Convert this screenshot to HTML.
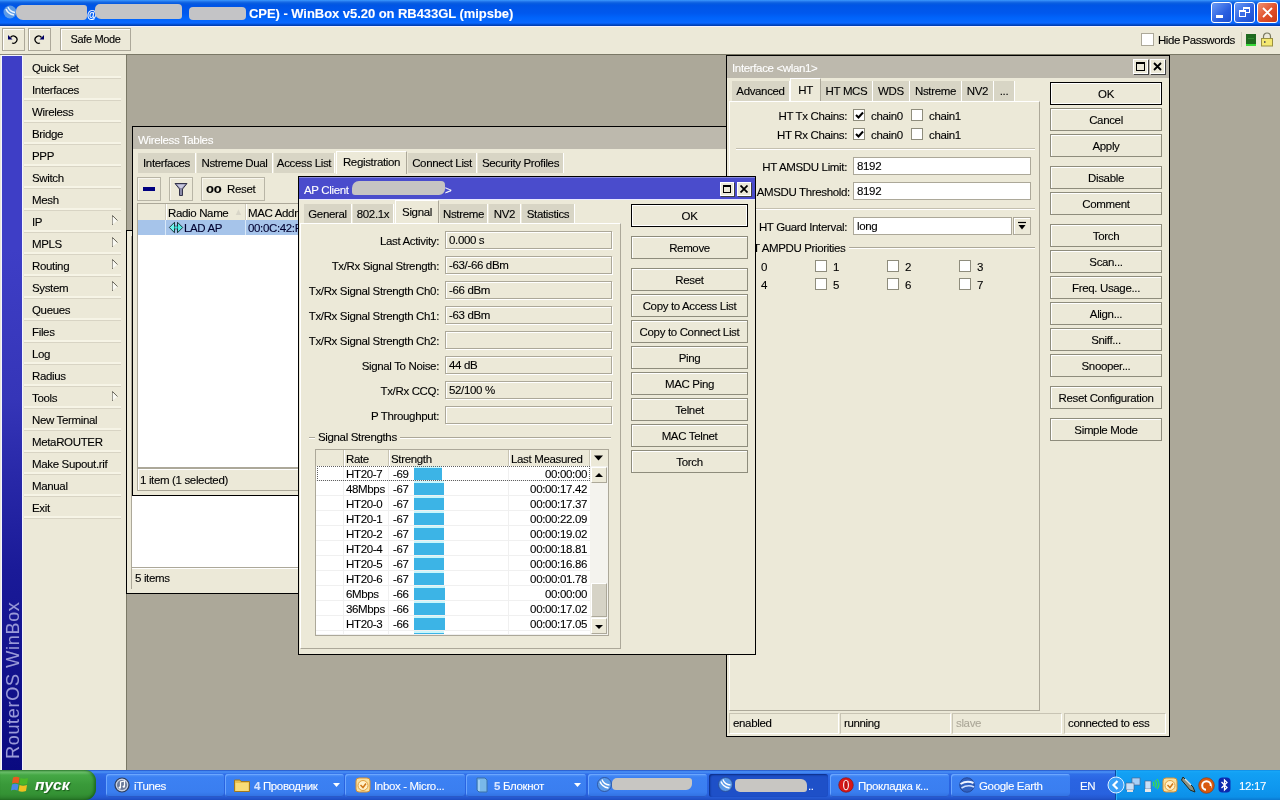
<!DOCTYPE html>
<html><head><meta charset="utf-8">
<style>
*{box-sizing:border-box;margin:0;padding:0}
html,body{width:1280px;height:800px;overflow:hidden;background:#aca899;font-family:"Liberation Sans",sans-serif;font-size:11px;color:#000}
#root{-webkit-text-stroke:0.1px currentColor}
.a{position:absolute}
.t{position:absolute;white-space:nowrap;line-height:14px;font-size:11.5px;letter-spacing:-0.35px}
.r{text-align:right}
.c{text-align:center}
.btn{position:absolute;background:#ece9d8;border:1px solid #8e8c7c;box-shadow:inset 1px 1px 0 #fff;text-align:center;line-height:22px;white-space:nowrap;font-size:11.5px;letter-spacing:-0.35px}
.btn.def{border-color:#000;box-shadow:inset 1px 1px 0 #fff,inset -1px -1px 0 #fff}
.fld{position:absolute;background:#ece9d8;border:1px solid #aca899;box-shadow:inset 1px 1px 0 #fff,1px 1px 0 #fff;line-height:17px;padding-left:3px;white-space:nowrap;font-size:11.5px;letter-spacing:-0.35px}
.wfld{position:absolute;background:#fff;border:1px solid #aca899;line-height:17px;padding-left:3px;white-space:nowrap;font-size:11.5px;letter-spacing:-0.35px}
.tab{position:absolute;background:#d8d5c5;border-right:1px solid #fff;text-align:center;line-height:20px;white-space:nowrap;font-size:11.5px;letter-spacing:-0.35px}
.tab.on{background:#ece9d8;border:1px solid #fff;border-bottom:none;border-right:1px solid #aca899}
.win{position:absolute;background:#ece9d8;border:1px solid #000;box-shadow:inset 1px 1px 0 #ece9d8}
.cb{position:absolute;width:12px;height:12px;background:#fff;border:1px solid #8e8c7c}
.sep{position:absolute;height:2px;border-top:1px solid #c4c0b0;border-bottom:1px solid #fff}
.menu{position:absolute;left:24px;width:97px;height:22px;border-bottom:1px solid #d8d4c4;box-shadow:inset 0 -2px 0 #f6f4e6}
.menu span{position:absolute;left:8px;top:4px;line-height:14px;white-space:nowrap;font-size:11.5px;letter-spacing:-0.35px}
</style></head><body><div id="root" style="position:absolute;left:0;top:0;width:1280px;height:800px;overflow:hidden;will-change:transform">

<!-- TITLE BAR -->
<div class="a" id="title" style="left:0;top:0;width:1280px;height:26px;background:linear-gradient(#3d9dff 0px,#2a7ef0 1px,#0a5ee0 3px,#0055e5 5px,#0058ee 13px,#0064fb 18px,#0a68ff 23px,#0045c0 25px,#003aa8 26px)"></div>
<svg class="a" style="left:3px;top:4px" width="14" height="16" viewBox="0 0 14 16"><circle cx="7" cy="8" r="6.5" fill="#5a9ae8"/><path d="M3 5 Q5 10 11 11" stroke="#e8f4ff" stroke-width="1.6" fill="none"/><path d="M5 3 Q6.5 7.5 12 8.5" stroke="#e8f4ff" stroke-width="1.4" fill="none"/></svg>
<div class="a" style="left:16px;top:5px;width:71px;height:15px;background:#c4c4c6;border-radius:6px 3px 4px 7px"></div>
<div class="t" style="left:87px;top:8px;color:#fff;font-size:10px;font-weight:bold">@</div>
<div class="a" style="left:95px;top:4px;width:87px;height:15px;background:#c4c4c6;border-radius:5px 4px 3px 6px"></div>
<div class="a" style="left:189px;top:7px;width:57px;height:13px;background:#c4c4c6;border-radius:4px"></div>
<div class="t" style="left:249px;top:6px;color:#fff;font-weight:bold;font-size:13px;line-height:15px;letter-spacing:-0.05px">CPE) - WinBox v5.20 on RB433GL (mipsbe)</div>
<div class="a" style="left:1211px;top:2px;width:21px;height:21px;border:1px solid #fff;border-radius:3px;background:linear-gradient(135deg,#6b9bf5,#2a5fe0 60%,#1b4fd0)"></div>
<div class="a" style="left:1216px;top:15px;width:7px;height:3px;background:#fff"></div>
<div class="a" style="left:1234px;top:2px;width:21px;height:21px;border:1px solid #fff;border-radius:3px;background:linear-gradient(135deg,#6b9bf5,#2a5fe0 60%,#1b4fd0)"></div>
<div class="a" style="left:1243px;top:7px;width:7px;height:6px;border:1px solid #fff;border-top-width:2px"></div>
<div class="a" style="left:1239px;top:10px;width:7px;height:7px;border:1px solid #fff;border-top-width:2px;background:#3a6de6"></div>
<div class="a" style="left:1257px;top:2px;width:21px;height:21px;border:1px solid #fff;border-radius:3px;background:linear-gradient(135deg,#f09070,#e0502a 55%,#c83c18)"></div>
<svg class="a" style="left:1261px;top:6px" width="13" height="13" viewBox="0 0 13 13"><path d="M2 2 L11 11 M11 2 L2 11" stroke="#fff" stroke-width="1.8"/></svg>
<!-- TOOLBAR -->
<div class="a" style="left:0;top:26px;width:1280px;height:28px;background:#ece9d8;border-top:1px solid #f4f2ff"></div>
<div class="btn" style="left:2px;top:28px;width:23px;height:23px;border-color:#aca899"></div>
<svg class="a" style="left:7px;top:33px" width="12" height="12" viewBox="0 0 12 12"><path d="M3.5 4.5 A3.6 3.6 0 1 1 5 10" stroke="#000" stroke-width="1.3" fill="none"/><path d="M1 2 L1 6.5 L5.5 6.5 Z" fill="#000066"/></svg>
<div class="btn" style="left:28px;top:28px;width:23px;height:23px;border-color:#aca899"></div>
<svg class="a" style="left:33px;top:33px" width="12" height="12" viewBox="0 0 12 12"><path d="M8.5 4.5 A3.6 3.6 0 1 0 7 10" stroke="#000" stroke-width="1.3" fill="none"/><path d="M11 2 L11 6.5 L6.5 6.5 Z" fill="#000066"/></svg>
<div class="btn" style="left:60px;top:28px;width:71px;height:23px;border-color:#aca899;line-height:21px;font-size:11px">Safe Mode</div>
<div class="a" style="left:1141px;top:33px;width:13px;height:13px;background:#fff;border:1px solid #aca899"></div>
<div class="t" style="left:1158px;top:33px;font-size:11.5px;letter-spacing:-0.45px">Hide Passwords</div>
<div class="a" style="left:1241px;top:32px;width:1px;height:15px;background:#d0ccbc"></div>
<div class="a" style="left:1246px;top:34px;width:10px;height:12px;background:#1f6a1f;border-bottom:2px solid #38d838"></div>
<div class="a" style="left:1248px;top:38px;width:6px;height:1px;background:#2f8a2f"></div>
<svg class="a" style="left:1260px;top:32px" width="14" height="15" viewBox="0 0 14 15"><path d="M3.5 7 V4.5 A3.5 3.5 0 0 1 10.5 4.5 V7" stroke="#7a7a60" stroke-width="1.2" fill="none"/><rect x="1.5" y="6.5" width="11" height="7.5" fill="#f4e870" stroke="#9a9040"/><rect x="4" y="9" width="1.5" height="2" fill="#665"/></svg>
<!-- SIDEBAR -->
<div class="a" style="left:0;top:54px;width:126px;height:716px;background:#ece9d8;border-top:1px solid #8c8a7c"></div>
<div class="a" style="left:1px;top:55px;width:22px;height:715px;background:#f4f4ff"></div>
<div class="a" style="left:2px;top:56px;width:20px;height:714px;background:linear-gradient(#3e3ec6 0%,#3e3ec6 27%,#3535b8 48%,#2828a8 59%,#1a1a98 72%,#0a0a80 100%)"></div>

<div class="menu" style="top:57px"><span>Quick Set</span></div>
<div class="menu" style="top:79px"><span>Interfaces</span></div>
<div class="menu" style="top:101px"><span>Wireless</span></div>
<div class="menu" style="top:123px"><span>Bridge</span></div>
<div class="menu" style="top:145px"><span>PPP</span></div>
<div class="menu" style="top:167px"><span>Switch</span></div>
<div class="menu" style="top:189px"><span>Mesh</span></div>
<div class="menu" style="top:211px"><span>IP</span></div>
<svg class="a" style="left:111px;top:215px" width="8" height="11" viewBox="0 0 8 11"><path d="M1.5 0.5 L1.5 10 M1.5 0.5 L6.5 5.5" stroke="#6a685e" stroke-width="1" fill="none"/><path d="M1.5 1.5 L1.5 9.5 L6 6 Z" fill="#fff" opacity="0.7"/></svg>
<div class="menu" style="top:233px"><span>MPLS</span></div>
<svg class="a" style="left:111px;top:237px" width="8" height="11" viewBox="0 0 8 11"><path d="M1.5 0.5 L1.5 10 M1.5 0.5 L6.5 5.5" stroke="#6a685e" stroke-width="1" fill="none"/><path d="M1.5 1.5 L1.5 9.5 L6 6 Z" fill="#fff" opacity="0.7"/></svg>
<div class="menu" style="top:255px"><span>Routing</span></div>
<svg class="a" style="left:111px;top:259px" width="8" height="11" viewBox="0 0 8 11"><path d="M1.5 0.5 L1.5 10 M1.5 0.5 L6.5 5.5" stroke="#6a685e" stroke-width="1" fill="none"/><path d="M1.5 1.5 L1.5 9.5 L6 6 Z" fill="#fff" opacity="0.7"/></svg>
<div class="menu" style="top:277px"><span>System</span></div>
<svg class="a" style="left:111px;top:281px" width="8" height="11" viewBox="0 0 8 11"><path d="M1.5 0.5 L1.5 10 M1.5 0.5 L6.5 5.5" stroke="#6a685e" stroke-width="1" fill="none"/><path d="M1.5 1.5 L1.5 9.5 L6 6 Z" fill="#fff" opacity="0.7"/></svg>
<div class="menu" style="top:299px"><span>Queues</span></div>
<div class="menu" style="top:321px"><span>Files</span></div>
<div class="menu" style="top:343px"><span>Log</span></div>
<div class="menu" style="top:365px"><span>Radius</span></div>
<div class="menu" style="top:387px"><span>Tools</span></div>
<svg class="a" style="left:111px;top:391px" width="8" height="11" viewBox="0 0 8 11"><path d="M1.5 0.5 L1.5 10 M1.5 0.5 L6.5 5.5" stroke="#6a685e" stroke-width="1" fill="none"/><path d="M1.5 1.5 L1.5 9.5 L6 6 Z" fill="#fff" opacity="0.7"/></svg>
<div class="menu" style="top:409px"><span>New Terminal</span></div>
<div class="menu" style="top:431px"><span>MetaROUTER</span></div>
<div class="menu" style="top:453px"><span>Make Supout.rif</span></div>
<div class="menu" style="top:475px"><span>Manual</span></div>
<div class="menu" style="top:497px"><span>Exit</span></div>
<div class="a" style="left:-76px;top:661px;width:178px;height:18px;transform:rotate(-90deg);color:#9a9ad8;font-size:18px;line-height:18px;letter-spacing:0.7px;white-space:nowrap;text-align:left">RouterOS WinBox</div>

<!-- DESKTOP -->
<div class="a" style="left:126px;top:54px;width:1154px;height:716px;background:#aca899;border-top:1px solid #7a7866;border-left:1px solid #7a7866"></div>


<!-- BACK WINDOW -->
<div class="win" style="left:126px;top:230px;width:200px;height:364px;"></div>
<div class="a" style="left:131px;top:236px;width:180px;height:332px;background:#fff;border-left:1px solid #aca899"></div>
<div class="a" style="left:131px;top:567px;width:180px;height:22px;background:#ece9d8;border-top:1px solid #aca899;border-left:1px solid #aca899;box-shadow:inset 0 1px 0 #fff"></div>
<div class="t" style="left:135px;top:571px">5 items</div>

<!-- WIRELESS TABLES -->
<div class="win" style="left:132px;top:126px;width:595px;height:370px;"></div>
<div class="a" style="left:133px;top:127px;width:593px;height:22px;background:#bdb9ad"></div>
<div class="t" style="left:138px;top:133px;color:#fff">Wireless Tables</div>
<div class="tab" style="left:138px;top:153px;width:58px;height:20px">Interfaces</div>
<div class="tab" style="left:197px;top:153px;width:76px;height:20px">Nstreme Dual</div>
<div class="tab" style="left:274px;top:153px;width:61px;height:20px">Access List</div>
<div class="tab on" style="left:336px;top:151px;width:71px;height:23px;line-height:20px">Registration</div>
<div class="tab" style="left:408px;top:153px;width:69px;height:20px">Connect List</div>
<div class="tab" style="left:478px;top:153px;width:86px;height:20px">Security Profiles</div>
<div class="btn" style="left:137px;top:177px;width:24px;height:24px;border-color:#b8b5a6;box-shadow:inset 1px 1px 0 #f8f6ee"></div>
<div class="a" style="left:143px;top:187px;width:12px;height:4px;background:#000080"></div>
<div class="btn" style="left:169px;top:177px;width:24px;height:24px;border-color:#b8b5a6;box-shadow:inset 1px 1px 0 #f8f6ee"></div>
<svg class="a" style="left:174px;top:182px" width="14" height="15" viewBox="0 0 14 15"><path d="M1 1.5 H13 L8.5 7 V13.5 H5.5 V7 Z" fill="#8a8aa8" stroke="#33334a" stroke-width="1"/><path d="M3 2.5 H11 L8 6 H6 Z" fill="#c8c8e0"/></svg>
<div class="btn" style="left:201px;top:177px;width:64px;height:24px;border-color:#b8b5a6;box-shadow:inset 1px 1px 0 #f8f6ee;line-height:22px;text-align:left"><span style="position:absolute;left:4px;top:4px;font-weight:bold;font-size:13px;line-height:14px;letter-spacing:-0.3px">oo</span><span style="position:absolute;left:25px;top:0">Reset</span></div>
<!-- table -->
<div class="a" style="left:137px;top:203px;width:585px;height:265px;background:#fff;border:1px solid #aca899"></div>
<div class="a" style="left:138px;top:204px;width:583px;height:16px;background:#ece9d8"></div>
<div class="a" style="left:165px;top:204px;width:1px;height:16px;background:#d0ccbc"></div>
<div class="a" style="left:166px;top:204px;width:1px;height:16px;background:#fff"></div>
<div class="a" style="left:245px;top:204px;width:1px;height:16px;background:#d0ccbc"></div>
<div class="a" style="left:246px;top:204px;width:1px;height:16px;background:#fff"></div>
<div class="t" style="left:168px;top:206px">Radio Name</div>
<div class="t" style="left:234px;top:205px;color:#d8d5c8;font-size:9px">&#9650;</div>
<div class="t" style="left:248px;top:206px">MAC Address</div>
<div class="a" style="left:138px;top:220px;width:583px;height:15px;background:#a6c4ea"></div>
<div class="a" style="left:165px;top:220px;width:1px;height:15px;background:#d8e8f8"></div>
<div class="a" style="left:245px;top:220px;width:1px;height:15px;background:#d8e8f8"></div>
<svg class="a" style="left:168px;top:221px" width="16" height="13" viewBox="0 0 16 13"><path d="M1.3 6.5 L6.5 1.3 V11.7 Z" fill="#70f4ec" stroke="#0a1a20" stroke-width="0.85" stroke-linejoin="miter"/><path d="M14.7 6.5 L9.5 1.3 V11.7 Z" fill="#50ece4" stroke="#0a1a20" stroke-width="0.85"/><rect x="6.5" y="5.2" width="3" height="2.6" fill="#40e8e0"/><path d="M6.5 5 H9.5 M6.5 8 H9.5" stroke="#0a1a20" stroke-width="0.9" stroke-dasharray="1 1"/></svg>
<div class="t" style="left:184px;top:221px;color:#000030">LAD AP</div>
<div class="t" style="left:248px;top:221px;color:#000030">00:0C:42:F</div>
<div class="a" style="left:137px;top:468px;width:585px;height:23px;background:#ece9d8;border:1px solid #aca899;border-top:1px solid #aca899;box-shadow:inset 1px 1px 0 #fff"></div>
<div class="t" style="left:140px;top:473px">1 item (1 selected)</div>



<!-- INTERFACE WINDOW -->
<div class="win" style="left:726px;top:55px;width:444px;height:682px;"></div>
<div class="a" style="left:727px;top:56px;width:442px;height:22px;background:#bdb9ad"></div>
<div class="t" style="left:732px;top:61px;color:#fff">Interface &lt;wlan1&gt;</div>
<div class="a" style="left:1133px;top:59px;width:15px;height:15px;background:#ece9d8;border:1px solid #fff;box-shadow:1px 1px 0 #404040"></div>
<div class="a" style="left:1136px;top:62px;width:9px;height:9px;border:1px solid #000;border-top-width:2px"></div>
<div class="a" style="left:1150px;top:59px;width:15px;height:15px;background:#ece9d8;border:1px solid #fff;box-shadow:1px 1px 0 #404040"></div>
<svg class="a" style="left:1153px;top:62px" width="9" height="9" viewBox="0 0 9 9"><path d="M1 1 L8 8 M8 1 L1 8" stroke="#000" stroke-width="1.8"/></svg>
<div class="tab" style="left:732px;top:81px;width:58px;height:20px">Advanced</div>
<div class="tab on" style="left:790px;top:78px;width:31px;height:24px;line-height:22px">HT</div>
<div class="tab" style="left:821px;top:81px;width:52px;height:20px">HT MCS</div>
<div class="tab" style="left:873px;top:81px;width:37px;height:20px">WDS</div>
<div class="tab" style="left:910px;top:81px;width:52px;height:20px">Nstreme</div>
<div class="tab" style="left:962px;top:81px;width:32px;height:20px">NV2</div>
<div class="tab" style="left:994px;top:81px;width:21px;height:20px">...</div>
<div class="a" style="left:729px;top:101px;width:311px;height:610px;border-left:1px solid #fff;border-top:1px solid #fff;border-right:1px solid #aca899;border-bottom:1px solid #aca899"></div>
<div class="t r" style="left:740px;width:107px;top:109px">HT Tx Chains:</div>
<div class="t r" style="left:740px;width:107px;top:128px">HT Rx Chains:</div>

<div class="cb" style="left:853px;top:109px"></div><svg class="a" style="left:855px;top:111px" width="9" height="9" viewBox="0 0 9 9"><path d="M1 4 L3.5 6.5 L8 1.5" stroke="#000" stroke-width="2" fill="none"/></svg>
<div class="t" style="left:871px;top:109px">chain0</div>
<div class="cb" style="left:911px;top:109px"></div>
<div class="t" style="left:929px;top:109px">chain1</div>
<div class="cb" style="left:853px;top:128px"></div><svg class="a" style="left:855px;top:130px" width="9" height="9" viewBox="0 0 9 9"><path d="M1 4 L3.5 6.5 L8 1.5" stroke="#000" stroke-width="2" fill="none"/></svg>
<div class="t" style="left:871px;top:128px">chain0</div>
<div class="cb" style="left:911px;top:128px"></div>
<div class="t" style="left:929px;top:128px">chain1</div>
<div class="sep" style="left:736px;top:148px;width:299px"></div>
<div class="t r" style="left:740px;width:107px;top:160px">HT AMSDU Limit:</div>
<div class="wfld" style="left:853px;top:157px;width:178px;height:18px">8192</div>
<div class="t r" style="left:740px;width:107px;top:185px">HT AMSDU Threshold:</div>
<div class="wfld" style="left:853px;top:182px;width:178px;height:18px">8192</div>
<div class="sep" style="left:736px;top:208px;width:299px"></div>
<div class="t r" style="left:740px;width:107px;top:220px">HT Guard Interval:</div>
<div class="wfld" style="left:853px;top:217px;width:159px;height:18px">long</div>
<div class="btn" style="left:1013px;top:217px;width:18px;height:18px;border-color:#aca899"></div>
<svg class="a" style="left:1017px;top:221px" width="10" height="10" viewBox="0 0 10 10"><path d="M1 1.5 H9" stroke="#000" stroke-width="1.2"/><path d="M1.5 4 H8.5 L5 8.5 Z" fill="#000"/></svg>
<div class="a" style="left:736px;top:247px;width:299px;height:2px;border-top:1px solid #aca899;border-bottom:1px solid #fff"></div>
<div class="t" style="left:745px;top:241px;background:#ece9d8;padding:0 3px 0 0">HT AMPDU Priorities</div>
<div class="cb" style="left:743px;top:260px"></div>
<div class="t" style="left:761px;top:260px">0</div>
<div class="cb" style="left:815px;top:260px"></div>
<div class="t" style="left:833px;top:260px">1</div>
<div class="cb" style="left:887px;top:260px"></div>
<div class="t" style="left:905px;top:260px">2</div>
<div class="cb" style="left:959px;top:260px"></div>
<div class="t" style="left:977px;top:260px">3</div>
<div class="cb" style="left:743px;top:278px"></div>
<div class="t" style="left:761px;top:278px">4</div>
<div class="cb" style="left:815px;top:278px"></div>
<div class="t" style="left:833px;top:278px">5</div>
<div class="cb" style="left:887px;top:278px"></div>
<div class="t" style="left:905px;top:278px">6</div>
<div class="cb" style="left:959px;top:278px"></div>
<div class="t" style="left:977px;top:278px">7</div>
<div class="btn def" style="left:1050px;top:82px;width:112px;height:23px">OK</div>
<div class="btn" style="left:1050px;top:108px;width:112px;height:23px">Cancel</div>
<div class="btn" style="left:1050px;top:134px;width:112px;height:23px">Apply</div>
<div class="btn" style="left:1050px;top:166px;width:112px;height:23px">Disable</div>
<div class="btn" style="left:1050px;top:192px;width:112px;height:23px">Comment</div>
<div class="btn" style="left:1050px;top:224px;width:112px;height:23px">Torch</div>
<div class="btn" style="left:1050px;top:250px;width:112px;height:23px">Scan...</div>
<div class="btn" style="left:1050px;top:276px;width:112px;height:23px">Freq. Usage...</div>
<div class="btn" style="left:1050px;top:302px;width:112px;height:23px">Align...</div>
<div class="btn" style="left:1050px;top:328px;width:112px;height:23px">Sniff...</div>
<div class="btn" style="left:1050px;top:354px;width:112px;height:23px">Snooper...</div>
<div class="btn" style="left:1050px;top:386px;width:112px;height:23px">Reset Configuration</div>
<div class="btn" style="left:1050px;top:418px;width:112px;height:23px">Simple Mode</div>
<div class="a" style="left:729px;top:713px;width:110px;height:21px;border:1px solid #c8c4b4;border-right-color:#fff;border-bottom-color:#fff"></div><div class="t" style="left:733px;top:716px;color:#000">enabled</div>
<div class="a" style="left:840px;top:713px;width:111px;height:21px;border:1px solid #c8c4b4;border-right-color:#fff;border-bottom-color:#fff"></div><div class="t" style="left:844px;top:716px;color:#000">running</div>
<div class="a" style="left:952px;top:713px;width:110px;height:21px;border:1px solid #c8c4b4;border-right-color:#fff;border-bottom-color:#fff"></div><div class="t" style="left:956px;top:716px;color:#aca899">slave</div>
<div class="a" style="left:1064px;top:713px;width:102px;height:21px;border:1px solid #c8c4b4;border-right-color:#fff;border-bottom-color:#fff"></div><div class="t" style="left:1068px;top:716px;color:#000">connected to ess</div>
<!-- AP CLIENT -->
<div class="win" style="left:298px;top:176px;width:458px;height:479px;"></div>
<div class="a" style="left:299px;top:177px;width:456px;height:23px;background:#4a4ccc;border-top:1px solid #8888dd;border-bottom:1px solid #e8e8ff"></div>
<div class="t" style="left:304px;top:183px;color:#fff">AP Client &lt;</div>
<div class="a" style="left:352px;top:181px;width:93px;height:14px;background:#c6c4c2;border-radius:7px 4px 6px 3px"></div>
<div class="t" style="left:445px;top:183px;color:#fff">&gt;</div>
<div class="a" style="left:720px;top:182px;width:14px;height:14px;background:#ece9d8;border:1px solid #fff;box-shadow:1px 1px 0 #404040"></div>
<div class="a" style="left:723px;top:185px;width:8px;height:8px;border:1px solid #000;border-top-width:2px"></div>
<div class="a" style="left:737px;top:182px;width:14px;height:14px;background:#ece9d8;border:1px solid #fff;box-shadow:1px 1px 0 #404040"></div>
<svg class="a" style="left:740px;top:185px" width="8" height="8" viewBox="0 0 8 8"><path d="M0.5 0.5 L7.5 7.5 M7.5 0.5 L0.5 7.5" stroke="#000" stroke-width="1.8"/></svg>
<div class="tab" style="left:304px;top:204px;width:48px;height:19px">General</div>
<div class="tab" style="left:353px;top:204px;width:41px;height:19px">802.1x</div>
<div class="tab on" style="left:395px;top:200px;width:44px;height:24px;line-height:22px">Signal</div>
<div class="tab" style="left:440px;top:204px;width:48px;height:19px">Nstreme</div>
<div class="tab" style="left:489px;top:204px;width:32px;height:19px">NV2</div>
<div class="tab" style="left:522px;top:204px;width:53px;height:19px">Statistics</div>
<div class="a" style="left:300px;top:223px;width:321px;height:426px;border-left:1px solid #fff;border-top:1px solid #fff;border-right:1px solid #aca899;border-bottom:1px solid #aca899"></div>

<div class="t r" style="left:300px;width:139px;top:234px">Last Activity:</div>
<div class="fld" style="left:445px;top:231px;width:167px;height:18px">0.000 s</div>
<div class="t r" style="left:300px;width:139px;top:259px">Tx/Rx Signal Strength:</div>
<div class="fld" style="left:445px;top:256px;width:167px;height:18px">-63/-66 dBm</div>
<div class="t r" style="left:300px;width:139px;top:284px">Tx/Rx Signal Strength Ch0:</div>
<div class="fld" style="left:445px;top:281px;width:167px;height:18px">-66 dBm</div>
<div class="t r" style="left:300px;width:139px;top:309px">Tx/Rx Signal Strength Ch1:</div>
<div class="fld" style="left:445px;top:306px;width:167px;height:18px">-63 dBm</div>
<div class="t r" style="left:300px;width:139px;top:334px">Tx/Rx Signal Strength Ch2:</div>
<div class="fld" style="left:445px;top:331px;width:167px;height:18px"></div>
<div class="t r" style="left:300px;width:139px;top:359px">Signal To Noise:</div>
<div class="fld" style="left:445px;top:356px;width:167px;height:18px">44 dB</div>
<div class="t r" style="left:300px;width:139px;top:384px">Tx/Rx CCQ:</div>
<div class="fld" style="left:445px;top:381px;width:167px;height:18px">52/100 %</div>
<div class="t r" style="left:300px;width:139px;top:409px">P Throughput:</div>
<div class="fld" style="left:445px;top:406px;width:167px;height:18px"></div>
<div class="a" style="left:309px;top:437px;width:302px;height:2px;border-top:1px solid #aca899;border-bottom:1px solid #fff"></div>
<div class="t" style="left:315px;top:430px;background:#ece9d8;padding:0 3px">Signal Strengths</div>
<div class="a" style="left:315px;top:449px;width:294px;height:187px;background:#fff;border:1px solid #aca899;overflow:hidden"></div>
<div class="a" style="left:316px;top:450px;width:292px;height:16px;background:#ece9d8"></div>

<div class="a" style="left:343px;top:450px;width:1px;height:16px;background:#c8c4b4"></div><div class="a" style="left:344px;top:450px;width:1px;height:16px;background:#fff"></div>
<div class="a" style="left:388px;top:450px;width:1px;height:16px;background:#c8c4b4"></div><div class="a" style="left:389px;top:450px;width:1px;height:16px;background:#fff"></div>
<div class="a" style="left:508px;top:450px;width:1px;height:16px;background:#c8c4b4"></div><div class="a" style="left:509px;top:450px;width:1px;height:16px;background:#fff"></div>
<div class="a" style="left:589px;top:450px;width:1px;height:16px;background:#c8c4b4"></div><div class="a" style="left:590px;top:450px;width:1px;height:16px;background:#fff"></div>
<div class="t" style="left:346px;top:452px">Rate</div><div class="t" style="left:391px;top:452px">Strength</div><div class="t" style="left:511px;top:452px">Last Measured</div>
<svg class="a" style="left:593px;top:454px" width="11" height="8" viewBox="0 0 11 8"><path d="M1 1.5 H10 L5.5 6.5 Z" fill="#000"/></svg>
<div class="a" style="left:316px;top:466px;width:274px;height:15px;overflow:hidden;border-bottom:1px solid #f0f0f0"><div class="a" style="left:27px;top:0;width:1px;height:15px;background:#f0f0f0"></div><div class="a" style="left:72px;top:0;width:1px;height:15px;background:#f0f0f0"></div><div class="a" style="left:192px;top:0;width:1px;height:15px;background:#f0f0f0"></div><div class="t" style="left:30px;top:1px">HT20-7</div><div class="t" style="left:77px;top:1px">-69</div><div class="a" style="left:98px;top:0;width:28px;height:15px;background:#c8f6fc"></div><div class="a" style="left:98px;top:2px;width:28px;height:12px;background:#3cb4e6"></div><div class="t r" style="left:193px;width:78px;top:1px">00:00:00</div></div>
<div class="a" style="left:316px;top:481px;width:274px;height:15px;overflow:hidden;border-bottom:1px solid #f0f0f0"><div class="a" style="left:27px;top:0;width:1px;height:15px;background:#f0f0f0"></div><div class="a" style="left:72px;top:0;width:1px;height:15px;background:#f0f0f0"></div><div class="a" style="left:192px;top:0;width:1px;height:15px;background:#f0f0f0"></div><div class="t" style="left:30px;top:1px">48Mbps</div><div class="t" style="left:77px;top:1px">-67</div><div class="a" style="left:98px;top:0;width:30px;height:15px;background:#c8f6fc"></div><div class="a" style="left:98px;top:2px;width:30px;height:12px;background:#3cb4e6"></div><div class="t r" style="left:193px;width:78px;top:1px">00:00:17.42</div></div>
<div class="a" style="left:316px;top:496px;width:274px;height:15px;overflow:hidden;border-bottom:1px solid #f0f0f0"><div class="a" style="left:27px;top:0;width:1px;height:15px;background:#f0f0f0"></div><div class="a" style="left:72px;top:0;width:1px;height:15px;background:#f0f0f0"></div><div class="a" style="left:192px;top:0;width:1px;height:15px;background:#f0f0f0"></div><div class="t" style="left:30px;top:1px">HT20-0</div><div class="t" style="left:77px;top:1px">-67</div><div class="a" style="left:98px;top:0;width:30px;height:15px;background:#c8f6fc"></div><div class="a" style="left:98px;top:2px;width:30px;height:12px;background:#3cb4e6"></div><div class="t r" style="left:193px;width:78px;top:1px">00:00:17.37</div></div>
<div class="a" style="left:316px;top:511px;width:274px;height:15px;overflow:hidden;border-bottom:1px solid #f0f0f0"><div class="a" style="left:27px;top:0;width:1px;height:15px;background:#f0f0f0"></div><div class="a" style="left:72px;top:0;width:1px;height:15px;background:#f0f0f0"></div><div class="a" style="left:192px;top:0;width:1px;height:15px;background:#f0f0f0"></div><div class="t" style="left:30px;top:1px">HT20-1</div><div class="t" style="left:77px;top:1px">-67</div><div class="a" style="left:98px;top:0;width:30px;height:15px;background:#c8f6fc"></div><div class="a" style="left:98px;top:2px;width:30px;height:12px;background:#3cb4e6"></div><div class="t r" style="left:193px;width:78px;top:1px">00:00:22.09</div></div>
<div class="a" style="left:316px;top:526px;width:274px;height:15px;overflow:hidden;border-bottom:1px solid #f0f0f0"><div class="a" style="left:27px;top:0;width:1px;height:15px;background:#f0f0f0"></div><div class="a" style="left:72px;top:0;width:1px;height:15px;background:#f0f0f0"></div><div class="a" style="left:192px;top:0;width:1px;height:15px;background:#f0f0f0"></div><div class="t" style="left:30px;top:1px">HT20-2</div><div class="t" style="left:77px;top:1px">-67</div><div class="a" style="left:98px;top:0;width:30px;height:15px;background:#c8f6fc"></div><div class="a" style="left:98px;top:2px;width:30px;height:12px;background:#3cb4e6"></div><div class="t r" style="left:193px;width:78px;top:1px">00:00:19.02</div></div>
<div class="a" style="left:316px;top:541px;width:274px;height:15px;overflow:hidden;border-bottom:1px solid #f0f0f0"><div class="a" style="left:27px;top:0;width:1px;height:15px;background:#f0f0f0"></div><div class="a" style="left:72px;top:0;width:1px;height:15px;background:#f0f0f0"></div><div class="a" style="left:192px;top:0;width:1px;height:15px;background:#f0f0f0"></div><div class="t" style="left:30px;top:1px">HT20-4</div><div class="t" style="left:77px;top:1px">-67</div><div class="a" style="left:98px;top:0;width:30px;height:15px;background:#c8f6fc"></div><div class="a" style="left:98px;top:2px;width:30px;height:12px;background:#3cb4e6"></div><div class="t r" style="left:193px;width:78px;top:1px">00:00:18.81</div></div>
<div class="a" style="left:316px;top:556px;width:274px;height:15px;overflow:hidden;border-bottom:1px solid #f0f0f0"><div class="a" style="left:27px;top:0;width:1px;height:15px;background:#f0f0f0"></div><div class="a" style="left:72px;top:0;width:1px;height:15px;background:#f0f0f0"></div><div class="a" style="left:192px;top:0;width:1px;height:15px;background:#f0f0f0"></div><div class="t" style="left:30px;top:1px">HT20-5</div><div class="t" style="left:77px;top:1px">-67</div><div class="a" style="left:98px;top:0;width:30px;height:15px;background:#c8f6fc"></div><div class="a" style="left:98px;top:2px;width:30px;height:12px;background:#3cb4e6"></div><div class="t r" style="left:193px;width:78px;top:1px">00:00:16.86</div></div>
<div class="a" style="left:316px;top:571px;width:274px;height:15px;overflow:hidden;border-bottom:1px solid #f0f0f0"><div class="a" style="left:27px;top:0;width:1px;height:15px;background:#f0f0f0"></div><div class="a" style="left:72px;top:0;width:1px;height:15px;background:#f0f0f0"></div><div class="a" style="left:192px;top:0;width:1px;height:15px;background:#f0f0f0"></div><div class="t" style="left:30px;top:1px">HT20-6</div><div class="t" style="left:77px;top:1px">-67</div><div class="a" style="left:98px;top:0;width:30px;height:15px;background:#c8f6fc"></div><div class="a" style="left:98px;top:2px;width:30px;height:12px;background:#3cb4e6"></div><div class="t r" style="left:193px;width:78px;top:1px">00:00:01.78</div></div>
<div class="a" style="left:316px;top:586px;width:274px;height:15px;overflow:hidden;border-bottom:1px solid #f0f0f0"><div class="a" style="left:27px;top:0;width:1px;height:15px;background:#f0f0f0"></div><div class="a" style="left:72px;top:0;width:1px;height:15px;background:#f0f0f0"></div><div class="a" style="left:192px;top:0;width:1px;height:15px;background:#f0f0f0"></div><div class="t" style="left:30px;top:1px">6Mbps</div><div class="t" style="left:77px;top:1px">-66</div><div class="a" style="left:98px;top:0;width:31px;height:15px;background:#c8f6fc"></div><div class="a" style="left:98px;top:2px;width:31px;height:12px;background:#3cb4e6"></div><div class="t r" style="left:193px;width:78px;top:1px">00:00:00</div></div>
<div class="a" style="left:316px;top:601px;width:274px;height:15px;overflow:hidden;border-bottom:1px solid #f0f0f0"><div class="a" style="left:27px;top:0;width:1px;height:15px;background:#f0f0f0"></div><div class="a" style="left:72px;top:0;width:1px;height:15px;background:#f0f0f0"></div><div class="a" style="left:192px;top:0;width:1px;height:15px;background:#f0f0f0"></div><div class="t" style="left:30px;top:1px">36Mbps</div><div class="t" style="left:77px;top:1px">-66</div><div class="a" style="left:98px;top:0;width:31px;height:15px;background:#c8f6fc"></div><div class="a" style="left:98px;top:2px;width:31px;height:12px;background:#3cb4e6"></div><div class="t r" style="left:193px;width:78px;top:1px">00:00:17.02</div></div>
<div class="a" style="left:316px;top:616px;width:274px;height:15px;overflow:hidden;border-bottom:1px solid #f0f0f0"><div class="a" style="left:27px;top:0;width:1px;height:15px;background:#f0f0f0"></div><div class="a" style="left:72px;top:0;width:1px;height:15px;background:#f0f0f0"></div><div class="a" style="left:192px;top:0;width:1px;height:15px;background:#f0f0f0"></div><div class="t" style="left:30px;top:1px">HT20-3</div><div class="t" style="left:77px;top:1px">-66</div><div class="a" style="left:98px;top:0;width:31px;height:15px;background:#c8f6fc"></div><div class="a" style="left:98px;top:2px;width:31px;height:12px;background:#3cb4e6"></div><div class="t r" style="left:193px;width:78px;top:1px">00:00:17.05</div></div>
<div class="a" style="left:316px;top:631px;width:274px;height:4px;overflow:hidden;border-bottom:1px solid #f0f0f0"><div class="a" style="left:27px;top:0;width:1px;height:15px;background:#f0f0f0"></div><div class="a" style="left:72px;top:0;width:1px;height:15px;background:#f0f0f0"></div><div class="a" style="left:192px;top:0;width:1px;height:15px;background:#f0f0f0"></div><div class="t" style="left:30px;top:1px">24Mbps</div><div class="t" style="left:77px;top:1px">-67</div><div class="a" style="left:98px;top:0;width:30px;height:15px;background:#c8f6fc"></div><div class="a" style="left:98px;top:2px;width:30px;height:12px;background:#3cb4e6"></div><div class="t r" style="left:193px;width:78px;top:1px">00:00:18.78</div></div>
<div class="a" style="left:317px;top:466px;width:273px;height:15px;border:1px dotted #606060"></div>
<div class="a" style="left:590px;top:466px;width:18px;height:169px;background:#f4f3ee"></div>
<div class="a" style="left:591px;top:467px;width:16px;height:16px;background:#ece9d8;border:1px solid #fff;border-right-color:#aca899;border-bottom-color:#aca899"></div>
<svg class="a" style="left:594px;top:471px" width="10" height="8" viewBox="0 0 10 8"><path d="M1 6 H9 L5 2 Z" fill="#000"/></svg>
<div class="a" style="left:591px;top:583px;width:16px;height:34px;background:#d6d3c6;border:1px solid #fff;border-right-color:#aca899;border-bottom-color:#aca899"></div>
<div class="a" style="left:591px;top:618px;width:16px;height:16px;background:#ece9d8;border:1px solid #fff;border-right-color:#aca899;border-bottom-color:#aca899"></div>
<svg class="a" style="left:594px;top:623px" width="10" height="8" viewBox="0 0 10 8"><path d="M1 2 H9 L5 6 Z" fill="#000"/></svg>

<div class="btn def" style="left:631px;top:204px;width:117px;height:23px">OK</div>
<div class="btn" style="left:631px;top:236px;width:117px;height:23px">Remove</div>
<div class="btn" style="left:631px;top:268px;width:117px;height:23px">Reset</div>
<div class="btn" style="left:631px;top:294px;width:117px;height:23px">Copy to Access List</div>
<div class="btn" style="left:631px;top:320px;width:117px;height:23px">Copy to Connect List</div>
<div class="btn" style="left:631px;top:346px;width:117px;height:23px">Ping</div>
<div class="btn" style="left:631px;top:372px;width:117px;height:23px">MAC Ping</div>
<div class="btn" style="left:631px;top:398px;width:117px;height:23px">Telnet</div>
<div class="btn" style="left:631px;top:424px;width:117px;height:23px">MAC Telnet</div>
<div class="btn" style="left:631px;top:450px;width:117px;height:23px">Torch</div>
<!-- TASKBAR -->
<div class="a" style="left:0;top:770px;width:1280px;height:30px;background:linear-gradient(#1f48b8 0px,#3b7fef 1px,#4a90f4 2px,#2f6ee8 4px,#2a64e2 10px,#2862df 24px,#2458d0 28px,#1d4cc0 30px)"></div>
<div class="a" style="left:0;top:770px;width:96px;height:30px;border-radius:0 11px 11px 0;background:linear-gradient(#3c8f3c 0px,#6cc06c 2px,#45a845 5px,#3a9a3a 14px,#349234 24px,#2a7a2a 30px);box-shadow:inset -2px 0 3px rgba(0,60,0,0.5)"></div>
<svg class="a" style="left:11px;top:776px" width="18" height="17" viewBox="0 0 18 17"><path d="M2 1.5 Q5 0 8.5 1.5 L7.5 7.5 Q4 6 1 7.5 Z" fill="#e85a20"/><path d="M9.5 2 Q13 3.5 17 2 L16 8 Q12 9.5 8.5 8 Z" fill="#4cb828"/><path d="M1 8.5 Q4 7 7.5 8.5 L6.5 14.5 Q3 13 0 14.5 Z" fill="#4a88e8"/><path d="M8.5 9 Q12 10.5 16 9 L15 15 Q11 16.5 7.5 15 Z" fill="#f0c020"/></svg>
<div class="t" style="left:35px;top:776px;color:#fff;font-weight:bold;font-style:italic;font-size:15.5px;line-height:18px;letter-spacing:0px;text-shadow:1px 1px 1px #1a5a1a">пуск</div>

<div class="a" style="left:106px;top:774px;width:118px;height:23px;border-radius:3px;background:linear-gradient(#5a9af8,#3c81f3 3px,#3a7ef0 18px,#3070e0);box-shadow:inset 0 -1px 0 #2a5ac8, inset 1px 1px 0 #6aa6ff"></div>
<div class="a" style="left:225px;top:774px;width:119px;height:23px;border-radius:3px;background:linear-gradient(#5a9af8,#3c81f3 3px,#3a7ef0 18px,#3070e0);box-shadow:inset 0 -1px 0 #2a5ac8, inset 1px 1px 0 #6aa6ff"></div>
<div class="a" style="left:345px;top:774px;width:120px;height:23px;border-radius:3px;background:linear-gradient(#5a9af8,#3c81f3 3px,#3a7ef0 18px,#3070e0);box-shadow:inset 0 -1px 0 #2a5ac8, inset 1px 1px 0 #6aa6ff"></div>
<div class="a" style="left:466px;top:774px;width:120px;height:23px;border-radius:3px;background:linear-gradient(#5a9af8,#3c81f3 3px,#3a7ef0 18px,#3070e0);box-shadow:inset 0 -1px 0 #2a5ac8, inset 1px 1px 0 #6aa6ff"></div>
<div class="a" style="left:588px;top:774px;width:119px;height:23px;border-radius:3px;background:linear-gradient(#5a9af8,#3c81f3 3px,#3a7ef0 18px,#3070e0);box-shadow:inset 0 -1px 0 #2a5ac8, inset 1px 1px 0 #6aa6ff"></div>
<div class="a" style="left:709px;top:774px;width:119px;height:23px;border-radius:3px;background:#1e50c8;box-shadow:inset 1px 1px 2px #0a2a80"></div>
<div class="a" style="left:830px;top:774px;width:119px;height:23px;border-radius:3px;background:linear-gradient(#5a9af8,#3c81f3 3px,#3a7ef0 18px,#3070e0);box-shadow:inset 0 -1px 0 #2a5ac8, inset 1px 1px 0 #6aa6ff"></div>
<div class="a" style="left:951px;top:774px;width:119px;height:23px;border-radius:3px;background:linear-gradient(#5a9af8,#3c81f3 3px,#3a7ef0 18px,#3070e0);box-shadow:inset 0 -1px 0 #2a5ac8, inset 1px 1px 0 #6aa6ff"></div>
<svg class="a" style="left:114px;top:777px" width="16" height="16" viewBox="0 0 16 16"><circle cx="8" cy="8" r="7" fill="#c8d0e0" stroke="#2a3a5a" stroke-width="1.2"/><circle cx="8" cy="8" r="5" fill="#6a7a9a"/><path d="M6.5 10.5 V5 L10.5 4 V9.5" stroke="#fff" stroke-width="1.2" fill="none"/><circle cx="5.8" cy="10.6" r="1.2" fill="#fff"/><circle cx="9.8" cy="9.6" r="1.2" fill="#fff"/></svg>
<div class="t" style="left:134px;top:779px;color:#fff;font-size:11.5px">iTunes</div>
<svg class="a" style="left:234px;top:778px" width="16" height="14" viewBox="0 0 16 14"><path d="M0.5 2 H6 L7 3.5 H15.5 V13.5 H0.5 Z" fill="#e8c050" stroke="#a07820"/><rect x="1.5" y="5" width="13" height="8" fill="#f8dc78"/></svg>
<div class="t" style="left:254px;top:779px;color:#fff;font-size:11.5px"><b style="color:#d8e4ff">4</b> Проводник</div>
<svg class="a" style="left:333px;top:783px" width="7" height="4" viewBox="0 0 7 4"><path d="M0 0 H7 L3.5 4 Z" fill="#fff"/></svg>
<svg class="a" style="left:355px;top:777px" width="16" height="16" viewBox="0 0 16 16"><rect x="1" y="1" width="14" height="14" rx="3" fill="#f8e0a0" stroke="#d89030"/><circle cx="8" cy="8.5" r="5" fill="#fff0c8" stroke="#e0a040"/><path d="M5.5 8 L8 10.5 L11 6.5" stroke="#d07818" stroke-width="1.5" fill="none"/></svg>
<div class="t" style="left:374px;top:779px;color:#fff;font-size:11.5px">Inbox - Micro...</div>
<svg class="a" style="left:475px;top:777px" width="14" height="16" viewBox="0 0 14 16"><path d="M2 1 H10 L12 3 V15 H4 L2 13 Z" fill="#7ab8e8" stroke="#3a70a8"/><path d="M4 3 V14" stroke="#c8e8ff"/></svg>
<div class="t" style="left:494px;top:779px;color:#fff;font-size:11.5px"><b style="color:#d8e4ff">5</b> Блокнот</div>
<svg class="a" style="left:574px;top:783px" width="7" height="4" viewBox="0 0 7 4"><path d="M0 0 H7 L3.5 4 Z" fill="#fff"/></svg>
<svg class="a" style="left:597px;top:777px" width="15" height="15" viewBox="0 0 15 15"><circle cx="7.5" cy="7.5" r="7" fill="#5a9ae8" stroke="#2a4a90" stroke-width="0.8"/><path d="M3 4.5 Q5 10 11.5 11" stroke="#fff" stroke-width="1.5" fill="none"/><path d="M5 2.5 Q6.5 7.5 12.5 8" stroke="#fff" stroke-width="1.3" fill="none"/></svg>
<svg class="a" style="left:718px;top:777px" width="15" height="15" viewBox="0 0 15 15"><circle cx="7.5" cy="7.5" r="7" fill="#5a9ae8" stroke="#2a4a90" stroke-width="0.8"/><path d="M3 4.5 Q5 10 11.5 11" stroke="#fff" stroke-width="1.5" fill="none"/><path d="M5 2.5 Q6.5 7.5 12.5 8" stroke="#fff" stroke-width="1.3" fill="none"/></svg>
<div class="a" style="left:612px;top:778px;width:80px;height:12px;background:#c8c6c2;border-radius:5px 3px 6px 4px"></div>
<div class="a" style="left:735px;top:779px;width:72px;height:13px;background:#c8c6c2;border-radius:4px 6px 3px 5px"></div>
<div class="t" style="left:808px;top:779px;color:#fff;font-size:11.5px">..</div>
<svg class="a" style="left:838px;top:777px" width="16" height="16" viewBox="0 0 16 16"><circle cx="8" cy="8" r="7.3" fill="#d81818" stroke="#801010" stroke-width="0.6"/><ellipse cx="8" cy="8" rx="3" ry="5.3" fill="#f8f0f0"/><ellipse cx="8" cy="8" rx="1.8" ry="4.3" fill="#c01010"/></svg>
<div class="t" style="left:858px;top:779px;color:#fff;font-size:11.5px">Прокладка к...</div>
<svg class="a" style="left:959px;top:777px" width="16" height="16" viewBox="0 0 16 16"><circle cx="8" cy="8" r="7.3" fill="#3060c0" stroke="#1a3070" stroke-width="0.6"/><path d="M1.5 7 Q8 3 14.5 6" stroke="#f0f4ff" stroke-width="2" fill="none"/><path d="M2.5 11 Q9 7 15 10" stroke="#d0e0ff" stroke-width="1.5" fill="none"/></svg>
<div class="t" style="left:979px;top:779px;color:#fff;font-size:11.5px">Google Earth</div>
<div class="t" style="left:1080px;top:779px;color:#fff;font-size:11.5px">EN</div>
<div class="a" style="left:1115px;top:770px;width:165px;height:30px;background:linear-gradient(#0c80dc 0px,#18a8f8 1px,#12a0f4 3px,#0e96ee 20px,#0c90e8 27px,#0a78d0 30px);border-left:1px solid #0a4aa0;box-shadow:inset 1px 0 0 #30b0f8"></div>
<svg class="a" style="left:1107px;top:776px" width="18" height="18" viewBox="0 0 18 18"><circle cx="9" cy="9" r="8" fill="#3aa0f8" stroke="#e0f0ff" stroke-width="1"/><path d="M10.5 5 L6.5 9 L10.5 13" stroke="#fff" stroke-width="2.2" fill="none"/></svg>
<svg class="a" style="left:1125px;top:777px" width="16" height="16" viewBox="0 0 16 16"><rect x="7" y="1" width="8" height="7" fill="#a8d0f8" stroke="#506080" stroke-width="0.6"/><rect x="1" y="6" width="8" height="7" fill="#c8e0f8" stroke="#506080" stroke-width="0.6"/><rect x="2" y="13" width="6" height="2" fill="#e0e0e0"/></svg>
<svg class="a" style="left:1144px;top:777px" width="17" height="16" viewBox="0 0 17 16"><rect x="1" y="4" width="6" height="8" fill="#c8e0f8" stroke="#506080" stroke-width="0.6"/><rect x="1" y="12" width="6" height="3" fill="#e8e8e8"/><path d="M9 5 Q11 7 9 9 M11 3.5 Q14 7 11 10.5 M13 2 Q17 7 13 12" stroke="#40e040" stroke-width="1.2" fill="none"/></svg>
<svg class="a" style="left:1162px;top:777px" width="16" height="16" viewBox="0 0 16 16"><rect x="1" y="1" width="14" height="14" rx="3" fill="#f8e0a0" stroke="#d89030"/><circle cx="8" cy="8.5" r="5" fill="#fff0c8" stroke="#e0a040"/><path d="M5.5 8 L8 10.5 L11 6.5" stroke="#d07818" stroke-width="1.5" fill="none"/></svg>
<svg class="a" style="left:1181px;top:776px" width="16" height="17" viewBox="0 0 16 17"><path d="M2 1 L12 11 L14 16 L9 14 L0.5 4 Z" fill="#8a9080" stroke="#202820" stroke-width="1"/><path d="M4 3 L10 9" stroke="#e0e0e0" stroke-width="1.2"/></svg>
<svg class="a" style="left:1198px;top:777px" width="17" height="17" viewBox="0 0 17 17"><circle cx="8.5" cy="8.5" r="7.8" fill="#d85a10" stroke="#903008" stroke-width="0.6"/><circle cx="8.5" cy="8.5" r="4.3" fill="none" stroke="#fff" stroke-width="2"/><rect x="8" y="9" width="5" height="5" fill="#d85a10"/></svg>
<svg class="a" style="left:1218px;top:777px" width="13" height="16" viewBox="0 0 13 16"><rect x="0.5" y="0.5" width="12" height="15" rx="4" fill="#0a2ab0"/><path d="M3.5 5 L9 10.5 L6.5 13 V3 L9 5.5 L3.5 11" stroke="#fff" stroke-width="1.3" fill="none"/></svg>
<div class="t" style="left:1239px;top:779px;color:#fff;font-size:11.5px">12:17</div>
</div></body></html>
